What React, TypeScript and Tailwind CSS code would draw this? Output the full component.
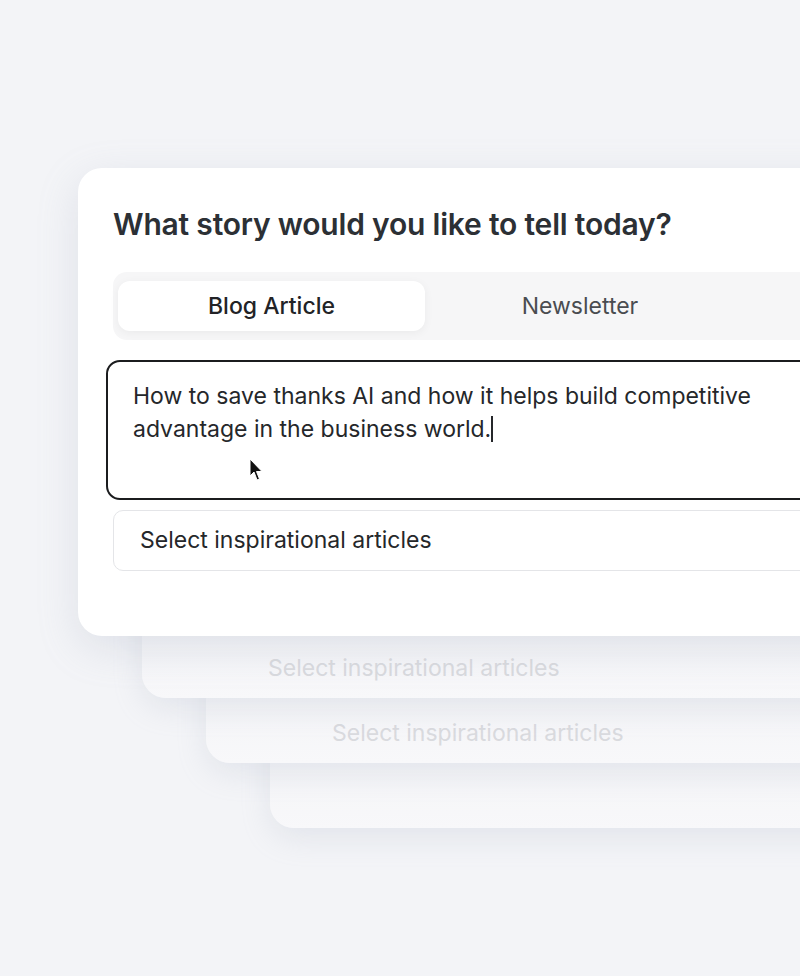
function BackCard({ className, label }: { className: string; label?: string }) {
  return (
    <div
      className={`absolute right-[-200px] flex items-end rounded-[24px] bg-gradient-to-b from-[#e9ebef] to-[#f8f8fa] pb-[13px] pl-[126px] shadow-[0_10px_30px_rgba(160,170,190,0.2)] ${className}`}
    >
      {label && <span className="text-[23px] text-[#d9dade]">{label}</span>}
    </div>
  );
}

function Cursor() {
  return (
    <svg className="absolute left-[141px] top-[96px]" width="14" height="24" viewBox="0 0 14 24">
      <path d="M1 1 L1 18 L5 14 L8 22 L10.5 21 L7.5 13.5 L13 13.5 Z" fill="#111" stroke="#fff" strokeWidth="1" />
    </svg>
  );
}

export default function App() {
  return (
    <div className="w-[800px] h-[976px] overflow-hidden bg-[#f3f4f7] font-['Inter',sans-serif]">
      <div className="relative pt-[168px] pl-[78px]">
        <BackCard className="left-[270px] top-[600px] h-[228px]" />
        <BackCard className="left-[206px] top-[540px] h-[223px]" label="Select inspirational articles" />
        <BackCard className="left-[142px] top-[480px] h-[218px]" label="Select inspirational articles" />

        <div className="relative flex w-[900px] h-[468px] flex-col rounded-[24px] bg-white pt-[36px] pl-[35px] shadow-[0_12px_40px_rgba(150,160,180,0.22)]">
          <h1 className="text-[30px] font-semibold leading-[40px] tracking-[-0.2px] text-[#2c3035]">
            What story would you like to tell today?
          </h1>

          <div className="mt-[28px] flex h-[68px] items-center rounded-[14px] bg-[#f6f6f7] pl-[5px]">
            <div className="flex h-[50px] w-[307px] items-center justify-center rounded-[12px] bg-white text-[23px] font-medium text-[#222326] shadow-[0_2px_10px_rgba(0,0,0,0.05)]">
              Blog Article
            </div>
            <div className="flex w-[310px] items-center justify-center text-[23px] text-[#4a4c50]">
              Newsletter
            </div>
          </div>

          <div className="relative -ml-[7px] mt-[20px] h-[140px] rounded-[14px] border-2 border-[#1b1c1e] bg-white pt-[18px] pl-[25px]">
            <p className="w-[650px] text-[23px] leading-[33px] text-[#25272a]">
              How to save thanks AI and how it helps build competitive advantage in the business world.
              <span className="inline-block h-[26px] w-[1.5px] bg-[#25272a] align-[-5px]" />
            </p>
            <Cursor />
          </div>

          <div className="mt-[10px] flex h-[61px] items-center rounded-[10px] border border-[#e4e5e8] bg-white pl-[26px] text-[23px] text-[#25272a]">
            Select inspirational articles
          </div>
        </div>
      </div>
    </div>
  );
}
